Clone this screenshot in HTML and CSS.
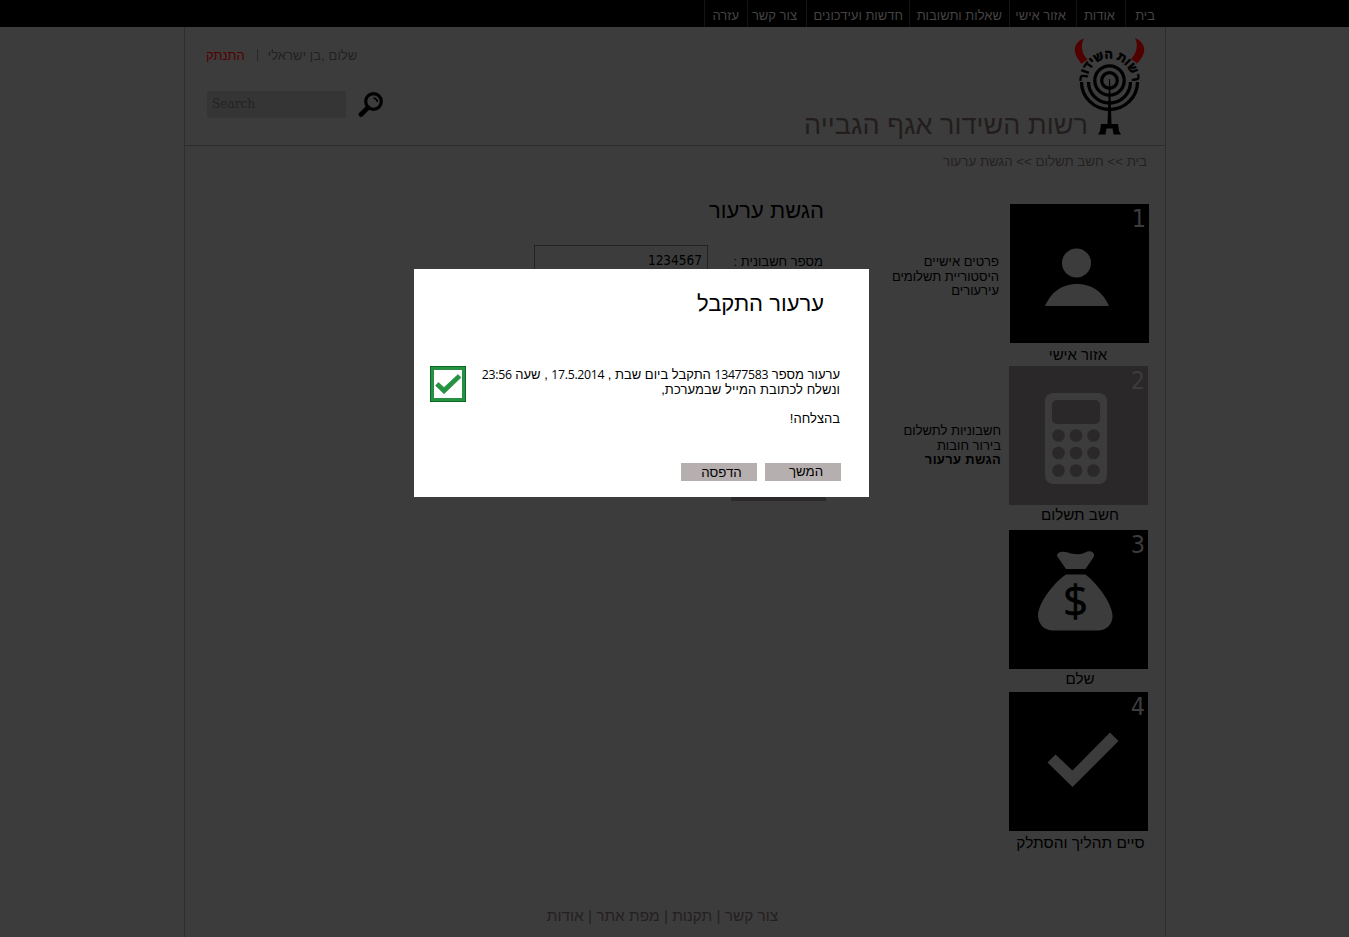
FILE: index.html
```html
<!DOCTYPE html>
<html lang="he" dir="rtl">
<head>
<meta charset="utf-8">
<title>הגשת ערעור</title>
<link rel="stylesheet" href="styles.css">
</head>
<body>
<nav class="topnav">
  <a class="n-home">בית</a><a class="n-about">אודות</a><a class="n-area">אזור אישי</a><a class="n-faq">שאלות ותשובות</a><a class="n-news">חדשות ועידכונים</a><a class="n-contact">צור קשר</a><a class="n-help">עזרה</a>
</nav>
<div class="page">
  <header class="header">
    <svg class="logo" viewBox="1070 34 80 102">
      <path class="horn" d="M1084 38.500C1077 41 1074 46 1075 52C1076 57 1079 60 1081.500 64Q1084 61 1087.500 59.500C1082 54 1080 46 1084 38.500Z"/>
      <path class="horn" d="M1135 38C1142 41 1145 46 1144 52C1143 57 1140 60 1137 63.500Q1134.500 60.500 1131 59C1136 54 1139 46 1135 38Z"/>
      <path id="arc" fill="none" d="M1087 86L1087 81A22.500 22.500 0 0 1 1132 81L1132 86"/>
      <text class="arc-text" text-anchor="middle"><textPath href="#arc" startOffset="50%">רשות השידור</textPath></text>
      <g class="rings">
        <circle cx="1109.500" cy="80.500" r="7.800"/>
        <circle cx="1109.500" cy="80.500" r="14.700"/>
        <path d="M1088.500 82a21 21 0 0 0 42 0M1081.500 82a28 27.500 0 0 0 56 0"/>
      </g>
      <path d="M1109.200 79h.8L1111.500 124h6.500l1 7 2 3.500h-7.500l-1-6h-6l-1 6h-7.500l2-3.500 1-7h6.500Z"/>
    </svg>
    <div class="brand">רשות השידור אגף הגבייה</div>
    <div class="tools">
      <div class="user"><span class="hello">שלום ,בן ישראלי</span><span class="logout">התנתק</span></div>
      <div class="search">
        <svg class="lens" viewBox="0 0 26 26"><circle cx="15.500" cy="10.500" r="7.800" fill="none" stroke="#000" stroke-width="3.200"/><path d="M10 16.500L3 23.500" stroke="#000" stroke-width="4.600" stroke-linecap="round"/><path d="M15.500 7q3.500 .5 4 4" fill="none" stroke="#000" stroke-width="1.600"/></svg>
        <div class="search-box" dir="ltr">Search</div>
      </div>
    </div>
  </header>
  <div class="crumbs">בית &gt;&gt; חשב תשלום &gt;&gt; הגשת ערעור</div>
  <main class="main">
    <aside class="steps">
      <section class="step step1">
        <div class="tile"><span class="num">1</span>
          <svg viewBox="0 0 139 139"><circle cx="66.500" cy="59" r="14.500"/><path d="M35 102C42 86 54 80 67 80S92 86 99 102Z"/></svg></div>
        <div class="links">פרטים אישיים<br>היסטוריית תשלומים<br>עירעורים</div>
        <div class="label">אזור אישי</div>
      </section>
      <section class="step step2">
        <div class="tile current"><span class="num">2</span>
          <svg viewBox="0 0 139 139"><rect x="36" y="27" width="62" height="91" rx="8"/><g class="hole"><rect x="43" y="34" width="48" height="24" rx="5"/><circle cx="49.500" cy="69.500" r="6.300"/><circle cx="67" cy="69.500" r="6.300"/><circle cx="84.500" cy="69.500" r="6.300"/><circle cx="49.500" cy="87" r="6.300"/><circle cx="67" cy="87" r="6.300"/><circle cx="84.500" cy="87" r="6.300"/><circle cx="49.500" cy="104.500" r="6.300"/><circle cx="67" cy="104.500" r="6.300"/><circle cx="84.500" cy="104.500" r="6.300"/></g></svg></div>
        <div class="links">חשבוניות לתשלום<br>בירור חובות<br><b>הגשת ערעור</b></div>
        <div class="label">חשב תשלום</div>
      </section>
      <section class="step step3">
        <div class="tile"><span class="num">3</span>
          <svg viewBox="0 0 139 139"><path d="M48 26C48 21 55 21 59 22.500S71 25.500 76 22.500 86 22 85 26.500L76.500 39H57Z"/><path d="M57 44.500H76.500C89 54 104 75 103.500 87 103 95 97 100.500 89 100.500H44C35 100.500 29 94 29 85 29 74 44 53 57 44.500Z"/><text class="dollar" x="66.500" y="87" text-anchor="middle">$</text></svg></div>
        <div class="label">שלם</div>
      </section>
      <section class="step step4">
        <div class="tile"><span class="num">4</span>
          <svg viewBox="0 0 139 139"><path d="M38.500 70.500L46.500 62.500 63.500 78.500 101 40.500 109.500 49 63.500 95Z"/></svg></div>
        <div class="label">סיים תהליך והסתלק</div>
      </section>
    </aside>
    <section class="content">
      <h1>הגשת ערעור</h1>
      <div class="field"><label>מספר חשבונית :</label><div class="input">1234567</div></div>
      <div class="submit"></div>
    </section>
  </main>
  <footer class="footer">צור קשר | תקנות | מפת אתר | אודות</footer>
</div>
<div class="modal">
  <h2>ערעור התקבל</h2>
  <div class="message">
    <div class="message-text">
      <p class="line1">ערעור מספר <span>13477583</span> התקבל ביום שבת , <span>17.5.2014</span> , שעה <span>23:56</span></p>
      <p class="line2">ונשלח לכתובת המייל שבמערכת,</p>
      <p class="line3">בהצלחה!</p>
    </div>
    <svg class="ok" viewBox="0 0 36 36"><path fill="#0f6429" d="M0 0H36V36H0Z"/><path fill="#21963f" d="M1 1H35V35H1Z"/><path fill="#3f7a4e" d="M3.500 3.500H32.500V32.500H3.500Z"/><path fill="#fff" d="M4 4H32V32H4Z"/><path fill="#21963f" stroke="#3b7d4c" stroke-width=".6" d="M5.500 19.500L8.500 16.500 14 21.500 28 8.500 31 11.500 14 27.800Z"/></svg>
  </div>
  <div class="actions"><button class="go">המשך</button><button class="print">הדפסה</button></div>
</div>
</body>
</html>
```
FILE: styles.css
```css
* { box-sizing: border-box; }
body {
  margin: 0;
  height: 937px;
  overflow: hidden;
  display: flex;
  flex-direction: column;
  background: #3c3c3c;
  color: #000;
  font: 13px/15px "Liberation Sans", Arial, sans-serif;
}
.topnav {
  flex: none;
  height: 27px;
  display: flex;
  padding-right: 183px;
  background: #000;
  color: #454343;
}
.topnav a {
  flex: none;
  padding: 8px 11px 0 0;
  border-left: 1px solid #141414;
  white-space: nowrap;
}
.topnav .n-home { width: 41px; }
.topnav .n-about { width: 49px; padding-right: 10px; }
.topnav .n-area { width: 67px; padding-right: 10px; }
.topnav .n-faq { width: 100px; padding-right: 7px; }
.topnav .n-news { width: 103px; padding-right: 6px; }
.topnav .n-contact { width: 59px; padding-right: 9px; }
.topnav .n-help { width: 43px; padding-right: 8px; }
.page {
  flex: 1;
  width: 982px;
  margin-right: 183px;
  border: solid #2e2e2e;
  border-width: 0 1px;
  display: flex;
  flex-direction: column;
}
.header {
  height: 119px;
  border-bottom: 1px solid #2d2d2d;
  display: flex;
}
.logo { width: 80px; height: 102px; margin: 7px 15px 0 0; }
.horn { fill: #510000; }
.rings { fill: none; stroke: #000; stroke-width: 3.3; }
.arc-text { font: bold 12px "Liberation Sans", sans-serif; stroke: #000; stroke-width: .7; }
.brand {
  margin: 83px -18px 0 0;
  font-size: 27px;
  line-height: 30px;
  letter-spacing: .04px;
  color: #231d1d;
  white-space: nowrap;
}
.tools { width: 200px; margin: 22px auto 0 0; padding-left: 21px; }
.user { display: flex; justify-content: flex-end; padding-right: 6px; }
.hello { color: #242020; border-left: 1px solid #292626; padding-left: 10px; line-height: 13px; height: 12px; white-space: nowrap; letter-spacing: .08px; }
.logout { color: #520000; padding-right: 12px; line-height: 13px; }
.search { display: flex; justify-content: flex-end; margin-top: 29px; }
.lens { width: 26px; height: 26px; margin-left: 12px; }
.search-box {
  width: 139px;
  height: 27px;
  margin-left: 1px;
  padding-left: 5px;
  background: #353535;
  color: #232323;
  font: 13.5px/25px "DejaVu Serif Condensed", "DejaVu Serif", serif;
}
.crumbs { padding: 8px 18px 0 0; font-size: 13.3px; color: #242121; }
.main { flex: 1; display: flex; padding-top: 35px; }
.steps { width: 290px; padding-right: 17px; }
.step { display: grid; grid-template-columns: 139px 1fr; align-content: start; }
.step1 { height: 162px; margin-right: -1px; }
.step2 { height: 164px; }
.step3 { height: 162px; }
.tile { position: relative; height: 139px; background: #000; color: #3c3c3c; }
.current { background: #2b2829; }
.tile svg { display: block; width: 139px; height: 139px; fill: #3c3c3c; }
.tile .hole { fill: #2b2829; }
.tile .dollar { fill: #000; stroke: #000; stroke-width: .6; font: 44px "Open Sans", sans-serif; }
.num { position: absolute; top: 2px; right: 3px; font: 25px/26px "DejaVu Sans Condensed", "DejaVu Sans", sans-serif; }
.label { grid-column: 1; padding-top: 4px; text-align: center; font-size: 15px; line-height: 16px; white-space: nowrap; }
.step1 .label { padding-right: 3px; }
.step2 .label, .step3 .label { padding-top: 2px; padding-left: 3px; font-size: 15.2px; }
.step4 .label { padding-left: 4px; font-size: 15.4px; }
.links { padding: 51px 11px 0 0; line-height: 14.5px; white-space: nowrap; }
.step2 .links { padding: 58px 8px 0 0; }
.links b { letter-spacing: .3px; }
.content { flex: 1; padding-right: 51px; }
.content h1 { margin: -6px 0 0; font-size: 22px; font-weight: normal; line-height: 26px; }
.field { display: flex; margin-top: 21px; }
.field label { width: 116px; padding: 9px 1px 0 0; }
.input {
  width: 174px;
  height: 25px;
  border: 1px solid #222;
  padding: 6px 5px 0 0;
  font: 13.5px/16px "DejaVu Sans Condensed", "DejaVu Sans", sans-serif;
}
.submit { width: 95px; height: 24px; margin: 207px -2px 0 0; background: #2b2929; }
.footer { height: 31px; padding: 1px 25px 0 0; text-align: center; font-size: 15.4px; line-height: 17px; color: #242021; }
.modal {
  position: absolute;
  left: 414px;
  top: 269px;
  width: 455px;
  height: 228px;
  padding: 21px 28px 0 16px;
  background: #fff;
}
.modal h2 { margin: 0 17px 0 0; font-size: 22px; font-weight: normal; line-height: 27px; }
.message { display: flex; justify-content: space-between; margin-top: 49px; white-space: nowrap; }
.message-text { padding-top: 2px; }
.message p { margin: 0 1px 0 0; line-height: 14.6px; }
.message .line2 { letter-spacing: .08px; }
.message .line3 { margin-top: 14.6px; }
.line1 span { font: 12.3px "Open Sans", sans-serif; letter-spacing: -.32px; line-height: 1; }
.ok { width: 36px; height: 36px; }
.actions { display: flex; gap: 8px; margin-top: 37px; }
.actions button {
  width: 76px;
  height: 18px;
  padding: 0;
  border: 0;
  background: #b6afaf;
  color: #000;
  font: 13.3px/18px "Liberation Sans", Arial, sans-serif;
}
.actions .go { padding-left: 6px; }
.actions .print { padding-left: 5px; padding-top: 1px; }
```
